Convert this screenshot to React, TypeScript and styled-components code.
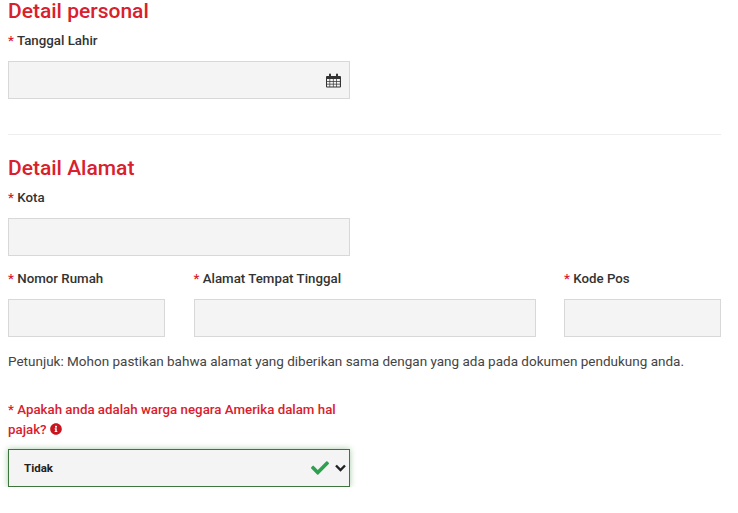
import React from "react";
import styled, { createGlobalStyle } from "styled-components";
import { FaCheck, FaInfoCircle } from "react-icons/fa";

const Global = createGlobalStyle`
  html, body { margin: 0; padding: 0; background: #fff; }
  body { font-family: Roboto, "Liberation Sans", sans-serif; color: #333; }
`;

const Page = styled.div`
  width: 713px;
  padding: 0 17px 0 8px;
  box-sizing: content-box;
`;

const Heading = styled.h2`
  margin: 0;
  font-size: 21px;
  line-height: 22px;
  font-weight: 500;
  color: #d9202c;
`;

const Label = styled.div<{ $danger?: boolean }>`
  font-size: 13.3px;
  line-height: 20px;
  padding-top: 1px;
  font-weight: 500;
  color: ${(p) => (p.$danger ? "#d9202c" : "#333")};
`;

const Star = styled.span`
  color: #d9202c;
`;

const Field = styled.div<{ $narrow?: boolean }>`
  display: flex;
  flex-direction: column;
  gap: 10px;
  width: ${(p) => (p.$narrow ? "342px" : "auto")};
`;

const Input = styled.div`
  height: 38px;
  box-sizing: border-box;
  background: #f4f4f4;
  border: 1px solid #d8d8d8;
  display: flex;
  align-items: center;
  justify-content: flex-end;
  padding-right: 8px;
`;

const Divider = styled.hr`
  border: 0;
  border-top: 1px solid #eee;
  margin: 35px 0 22px;
`;

const Row = styled.div`
  display: grid;
  grid-template-columns: 157px 342px 157px;
  justify-content: space-between;
  margin-top: 12px;
`;

const Hint = styled.p`
  margin: 14px 0 0;
  font-size: 13.5px;
  line-height: 20px;
  color: #444;
`;

const Select = styled.div`
  height: 38px;
  box-sizing: border-box;
  background: #f4f4f4;
  border: 1px solid #3c763d;
  box-shadow: 0 0 6px rgba(60, 140, 60, 0.45);
  display: flex;
  align-items: center;
  padding: 0 3px 0 15px;
  font-size: 11.5px;
  font-weight: 700;
  color: #222;
`;

const SelectText = styled.span`
  flex: 1;
`;

const Check = styled(FaCheck)`
  color: #2ea04f;
  font-size: 18px;
  margin-right: 6px;
`;

const Question = styled(Field)`
  margin-top: 28px;
  gap: 9px;
`;

const Info = styled(FaInfoCircle)`
  font-size: 12px;
  color: #c9151e;
  vertical-align: -1px;
`;

const Section = styled.div`
  margin-top: 8px;
`;

const KotaField = styled(Field)`
  margin-top: 8px;
`;

const Calendar = () => (
  <svg width="15" height="15" viewBox="0 0 15 15" aria-hidden="true">
    <path fill="#333" d="M1 3h2V1.500a1 1 0 0 1 2 0V3h5V1.500a1 1 0 0 1 2 0V3h2a1 1 0 0 1 1 1v9.500a1 1 0 0 1-1 1H1a1 1 0 0 1-1-1V4a1 1 0 0 1 1-1z" />
    <path fill="#f4f4f4" d="M1 6h2.500v2H1zM4.200 6h2.700v2H4.200zM7.600 6h2.700v2H7.600zM11 6h2.900v2H11zM1 8.700h2.500v2H1zM4.200 8.700h2.700v2H4.200zM7.600 8.700h2.700v2H7.600zM11 8.700h2.900v2H11zM1 11.400h2.500v2H1zM4.200 11.400h2.700v2H4.200zM7.600 11.400h2.700v2H7.600zM11 11.400h2.900v2H11z" />
  </svg>
);

const Chevron = () => (
  <svg width="11" height="8" viewBox="0 0 11 8" aria-hidden="true">
    <path d="M1 1.500l4.500 4.500L10 1.500" fill="none" stroke="#222" strokeWidth="2.400" />
  </svg>
);

const Req = ({ children }: { children: React.ReactNode }) => (
  <Label>
    <Star>*</Star> {children}
  </Label>
);

export default function App() {
  return (
    <Page>
      <Global />
      <Heading>Detail personal</Heading>
      <Section>
        <Field $narrow>
          <Req>Tanggal Lahir</Req>
          <Input>
            <Calendar />
          </Input>
        </Field>
      </Section>
      <Divider />
      <Heading>Detail Alamat</Heading>
      <KotaField $narrow>
        <Req>Kota</Req>
        <Input />
      </KotaField>
      <Row>
        <Field>
          <Req>Nomor Rumah</Req>
          <Input />
        </Field>
        <Field>
          <Req>Alamat Tempat Tinggal</Req>
          <Input />
        </Field>
        <Field>
          <Req>Kode Pos</Req>
          <Input />
        </Field>
      </Row>
      <Hint>Petunjuk: Mohon pastikan bahwa alamat yang diberikan sama dengan yang ada pada dokumen pendukung anda.</Hint>
      <Question $narrow>
        <Label $danger>
          * Apakah anda adalah warga negara Amerika dalam hal pajak? <Info />
        </Label>
        <Select>
          <SelectText>Tidak</SelectText>
          <Check />
          <Chevron />
        </Select>
      </Question>
    </Page>
  );
}
